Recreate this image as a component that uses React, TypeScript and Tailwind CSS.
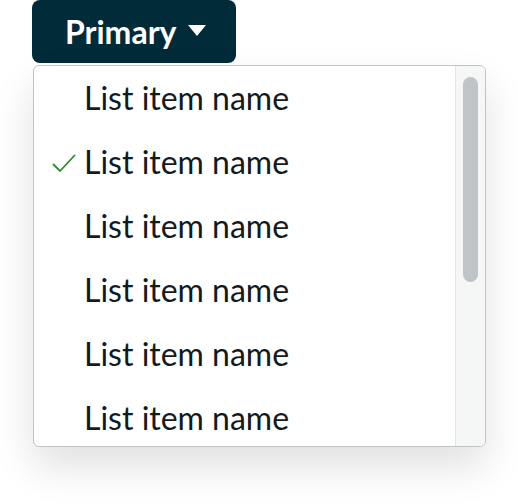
import { useState } from "react";

const items = [
  "List item name",
  "List item name",
  "List item name",
  "List item name",
  "List item name",
  "List item name",
];

export default function App() {
  const [selected, setSelected] = useState(1);

  return (
    <div className="w-[518px] h-[504px] bg-white font-['Lato','Liberation_Sans',sans-serif] text-[#121a1f]">
      <div className="pl-8 flex flex-col items-start">
        {/* Trigger */}
        <button className="h-[63px] w-[204px] rounded-lg bg-[#022b3a] text-white flex items-center pl-[33px] gap-[12px] text-[32px] font-bold">
          <span>Primary</span>
          <svg width="18" height="11" viewBox="0 0 18 11" className="mt-[-2px]">
            <path d="M0 0h18L9 11z" fill="currentColor" />
          </svg>
        </button>

        {/* Menu */}
        <div className="mt-[2px] ml-px w-[453px] h-[382px] rounded-md border border-[#bfc4c8] bg-white flex overflow-hidden shadow-[0_20px_40px_rgba(0,0,0,0.12)]">
          <ul className="flex-1">
            {items.map((name, i) => (
              <li key={i}>
                <button
                  onClick={() => setSelected(i)}
                  className="w-full h-16 flex items-center text-left text-[32px] leading-none"
                >
                  <span className="w-[50px] flex justify-end pr-[8px]">
                    {selected === i && (
                      <svg width="24" height="20" viewBox="0 0 24 20" className="mt-[2px]">
                        <path d="M1 11l7 7L23 2" fill="none" stroke="#2f8a2f" strokeWidth="1.8" />
                      </svg>
                    )}
                  </span>
                  <span>{name}</span>
                </button>
              </li>
            ))}
          </ul>
          <div className="w-[30px] border-l border-[#e3e6e8] bg-[#f5f6f6] pt-[11px] flex justify-center">
            <div className="w-[15px] h-[205px] rounded-full bg-[#bfc4c7]" />
          </div>
        </div>
      </div>
    </div>
  );
}
